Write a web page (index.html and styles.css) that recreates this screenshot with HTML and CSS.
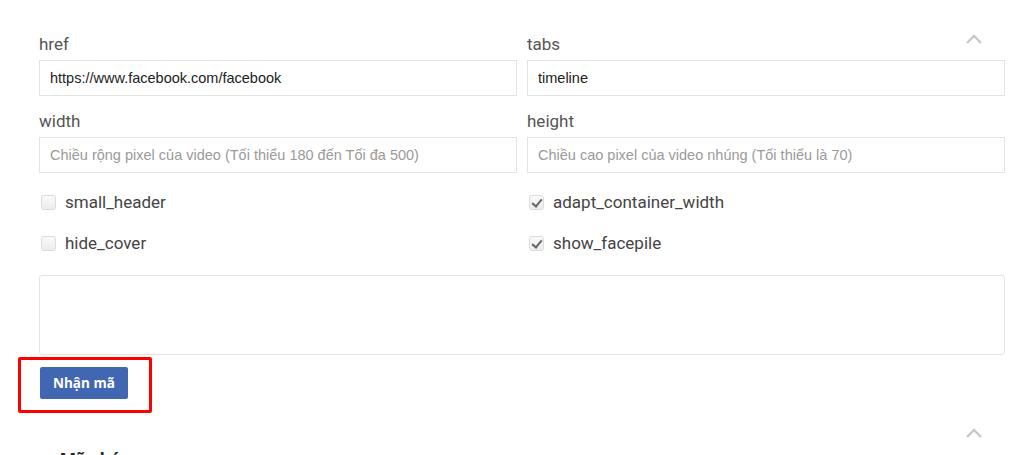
FILE: index.html
```html
<!DOCTYPE html>
<html lang="vi">
  <head>
    <meta charset="UTF-8" />
    <meta name="viewport" content="width=device-width, initial-scale=1.0" />
    <title>Page Plugin</title>
    <link rel="stylesheet" href="styles.css">
  </head>
  <body>
    <div class="panel">
      <button class="toggle" aria-label="collapse">
        <svg width="18" height="10" viewBox="0 0 18 10"><path d="M2 9 L9 2 L16 9" fill="none" stroke="#c9c9c9" stroke-width="2.4"/></svg>
      </button>
      <div class="grid">
        <div class="field">
          <label>href</label>
          <input type="text" value="https://www.facebook.com/facebook">
        </div>
        <div class="field">
          <label>tabs</label>
          <input type="text" value="timeline">
        </div>
        <div class="field">
          <label>width</label>
          <input type="text" placeholder="Chiều rộng pixel của video (Tối thiểu 180 đến Tối đa 500)">
        </div>
        <div class="field">
          <label>height</label>
          <input type="text" placeholder="Chiều cao pixel của video nhúng (Tối thiểu là 70)">
        </div>
        <div class="checks">
          <label class="check"><span class="box"></span>small_header</label>
          <label class="check"><span class="box"></span>hide_cover</label>
        </div>
        <div class="checks">
          <label class="check"><span class="box checked"></span>adapt_container_width</label>
          <label class="check"><span class="box checked"></span>show_facepile</label>
        </div>
      </div>
      <textarea class="code"></textarea>
      <div class="highlight">
        <button class="btn">Nhận mã</button>
      </div>
    </div>

    <div class="panel next">
      <button class="toggle" aria-label="collapse">
        <svg width="18" height="10" viewBox="0 0 18 10"><path d="M2 9 L9 2 L16 9" fill="none" stroke="#c9c9c9" stroke-width="2.4"/></svg>
      </button>
      <h3>Mã nhúng</h3>
    </div>
  </body>
</html>
```

FILE: styles.css
```css
body {
  margin: 0;
  background: #fff;
  font-family: Roboto, "Noto Sans", sans-serif;
  height: 455px;
  overflow: hidden;
}

.panel {
  position: relative;
  padding: 34px 19px 0 39px;
}

.toggle {
  position: absolute;
  top: 32px;
  right: 41px;
  border: 0;
  background: none;
  padding: 0;
  cursor: pointer;
}

.grid {
  display: grid;
  grid-template-columns: 1fr 1fr;
  column-gap: 10px;
  row-gap: 15px;
}

.field label {
  display: block;
  font-size: 17px;
  line-height: 21px;
  color: #555;
  margin-bottom: 5px;
}

.field input {
  box-sizing: border-box;
  width: 100%;
  height: 36px;
  border: 1px solid #e3e3e3;
  padding: 0 10px;
  font-family: "Liberation Sans", Arial, sans-serif;
  font-size: 14.5px;
  color: #222;
  outline: none;
}

.field input::placeholder {
  color: #9a9a9a;
}

.checks {
  display: flex;
  flex-direction: column;
  gap: 20px;
  padding-top: 4px;
}

.check {
  display: flex;
  align-items: center;
  gap: 9px;
  font-size: 17px;
  line-height: 21px;
  color: #444;
  padding-left: 2px;
}

.box {
  box-sizing: border-box;
  width: 15px;
  height: 15px;
  border: 1px solid #dcdcdc;
  border-radius: 3px;
  background: linear-gradient(#fafafa, #ececec);
  position: relative;
}

.box.checked::after {
  content: "";
  position: absolute;
  left: 4px;
  top: 1px;
  width: 4px;
  height: 8px;
  border: solid #666;
  border-width: 0 2px 2px 0;
  transform: rotate(40deg);
}

.code {
  display: block;
  box-sizing: border-box;
  width: 100%;
  height: 80px;
  margin-top: 21px;
  border: 1px solid #e3e3e3;
  border-radius: 3px;
  resize: none;
  outline: none;
}

.highlight {
  display: inline-block;
  margin: 2px 0 0 -21px;
  padding: 7px 21px 11px 19px;
  border: 3px solid #f00;
  border-radius: 2px;
}

.btn {
  display: block;
  height: 32px;
  padding: 0 13px;
  border: 0;
  border-radius: 2px;
  background: #4267b2;
  color: #fff;
  font-family: "Open Sans", sans-serif;
  font-weight: 700;
  font-size: 13.5px;
  cursor: pointer;
}

.next {
  padding-top: 9px;
}

.next .toggle {
  top: 13px;
}

.next h3 {
  margin: 27px 0 0 21px;
  font-size: 18px;
  color: #222;
}
```
